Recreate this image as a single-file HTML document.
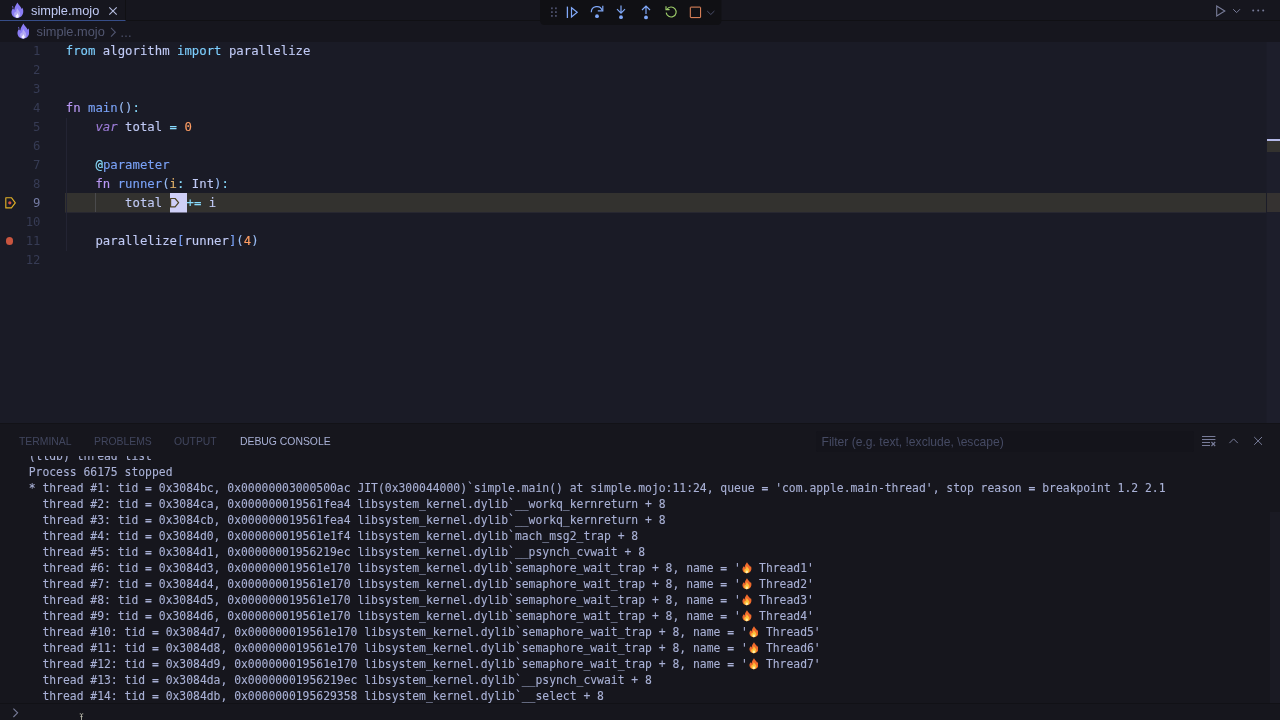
<!DOCTYPE html>
<html>
<head>
<meta charset="utf-8">
<title>simple.mojo</title>
<style>
*{box-sizing:border-box;margin:0;padding:0}
html,body{width:1280px;height:720px;overflow:hidden;background:#1a1b26}
body{position:relative;font-family:"Liberation Sans",sans-serif;color:#a9b1d6}
.abs{position:absolute}
#tab,#crumbs,#editor,#panel{will-change:transform}
#tabbar{left:0;top:0;width:1280px;height:21px;background:#16161e;border-bottom:1px solid #101014}
#tab{left:0;top:0;width:126px;height:21px;background:#16161e;border-right:1px solid #101014;border-bottom:1px solid #364d88}
#tab .lbl{left:31px;top:3px;font-size:12.8px;line-height:15px;color:#c0caf5;white-space:nowrap}
#crumbs{left:0;top:21px;width:1280px;height:21px;background:#16161e}
#crumbs .lbl{left:36.5px;top:2.5px;font-size:12.8px;line-height:15px;color:#515670;white-space:nowrap}
#editor{left:0;top:42px;width:1280px;height:381px;background:#1a1b26;overflow:hidden}
.ln{position:absolute;left:0;width:40.5px;height:19px;line-height:19px;text-align:right;font-family:"DejaVu Sans Mono","Liberation Mono",monospace;font-size:12.27px;color:#363b54;white-space:pre}
.ln.act{color:#737aa2}
.cl{position:absolute;left:65.8px;height:19px;line-height:19px;font-family:"DejaVu Sans Mono","Liberation Mono",monospace;font-size:12.32px;-webkit-text-stroke:0.12px;color:#c0caf5;white-space:pre}
.k{color:#bb9af7}.kc{color:#7dcfff}.f{color:#7aa2f7}.p{color:#9abdf5}.o{color:#89ddff}.n{color:#ff9e64}.y{color:#e0af68}.v{color:#9d7cd8;font-style:italic}.b{color:#7aa2f7}
#toolbar{left:544px;top:0;width:173px;height:24px;background:#101014;border-radius:5px}
#panel{left:0;top:423px;width:1280px;height:297px;background:#16161d;border-top:1px solid #121217}
.pt{position:absolute;top:11px;font-size:10.4px;line-height:13px;color:#41465e;white-space:nowrap}
.pt.on{color:#a9b1d6}
#filter{left:816px;top:7px;width:378px;height:20.5px;background:#14141b;border-radius:2px}
#filter span{position:absolute;left:5.5px;top:3.5px;font-size:12.1px;line-height:14px;color:#454a63;white-space:nowrap}
#console{left:0;top:32px;width:1270px;height:250px;overflow:hidden}
.em{display:inline-block;position:relative;width:11.3px;height:16px;overflow:hidden;vertical-align:top;color:transparent}
.em svg{position:absolute;left:1px;top:2px;width:9.6px;height:11.6px}
.co{position:absolute;left:28.7px;height:16px;line-height:16px;font-family:"DejaVu Sans Mono","Liberation Mono",monospace;font-size:11.38px;color:#a9b1d6;white-space:pre;-webkit-text-stroke:0.1px}
</style>
</head>
<body>
<div id="tabbar" class="abs"></div>
<div id="tab" class="abs"><span class="lbl abs">simple.mojo</span></div>
<div id="crumbs" class="abs"><span class="lbl abs">simple.mojo</span></div>

<!-- flame icons -->
<svg class="abs" style="left:11.3px;top:2px" width="12.4" height="16.4" viewBox="0 0 26 32" preserveAspectRatio="none"><path d="M13.5 1 C15 5 20.5 8.5 22.5 13.5 C23.5 12.5 23.8 11.5 23.8 10.5 C26 14 26 18 25.5 21 C24.5 27 19.5 31 13 31 C6.5 31 1.5 27 1 21 C0.6 16.5 3 13.5 4.5 11.5 C5 13.5 6 14.5 7 15 C7 10 10.5 6 13.5 1 Z" fill="#8a7cf4"/><path d="M3.2 7.5 C4 8.8 5 9.2 5.2 10.5 C4.6 11.4 3.4 11.4 2.8 10.5 C2.4 9.5 2.8 8.5 3.2 7.5 Z" fill="#8a7cf4"/><path d="M13 12 C15 16 19.5 18.5 19.5 24 C19.5 28 16.5 30.6 13 30.6 C9.5 30.6 6.5 28 6.5 24.2 C6.5 21.5 8 19.8 9.3 18.5 C9.6 19.6 10.2 20.2 11 20.5 C10.8 17.5 12 14.5 13 12 Z" fill="#b3aaf3"/><path d="M12.8 21.5 C14 24 16.2 25 16.2 27.6 C16.2 29.5 14.8 30.6 13 30.6 C11.2 30.6 9.8 29.5 9.8 27.7 C9.8 26.2 10.6 25.4 11.3 24.8 C11.6 25.4 11.9 25.7 12.3 25.8 C12.2 24.2 12.4 22.8 12.8 21.5 Z" fill="#f1efff"/></svg>
<svg class="abs" style="left:16.7px;top:23px" width="12.4" height="16.2" viewBox="0 0 26 32" preserveAspectRatio="none"><path d="M13.5 1 C15 5 20.5 8.5 22.5 13.5 C23.5 12.5 23.8 11.5 23.8 10.5 C26 14 26 18 25.5 21 C24.5 27 19.5 31 13 31 C6.5 31 1.5 27 1 21 C0.6 16.5 3 13.5 4.5 11.5 C5 13.5 6 14.5 7 15 C7 10 10.5 6 13.5 1 Z" fill="#8a7cf4"/><path d="M3.2 7.5 C4 8.8 5 9.2 5.2 10.5 C4.6 11.4 3.4 11.4 2.8 10.5 C2.4 9.5 2.8 8.5 3.2 7.5 Z" fill="#8a7cf4"/><path d="M13 12 C15 16 19.5 18.5 19.5 24 C19.5 28 16.5 30.6 13 30.6 C9.5 30.6 6.5 28 6.5 24.2 C6.5 21.5 8 19.8 9.3 18.5 C9.6 19.6 10.2 20.2 11 20.5 C10.8 17.5 12 14.5 13 12 Z" fill="#b3aaf3"/><path d="M12.8 21.5 C14 24 16.2 25 16.2 27.6 C16.2 29.5 14.8 30.6 13 30.6 C11.2 30.6 9.8 29.5 9.8 27.7 C9.8 26.2 10.6 25.4 11.3 24.8 C11.6 25.4 11.9 25.7 12.3 25.8 C12.2 24.2 12.4 22.8 12.8 21.5 Z" fill="#f1efff"/></svg>

<!-- tab close -->
<svg class="abs" style="left:105px;top:3px" width="16" height="16" viewBox="0 0 16 16"><path d="M4.3 4.3 L11.7 11.7 M11.7 4.3 L4.3 11.7" stroke="#b4bce0" stroke-width="1.1" fill="none"/></svg>
<!-- breadcrumb chevron + dots -->
<svg class="abs" style="left:105px;top:23.5px" width="16" height="16" viewBox="0 0 16 16"><path d="M6 3.8 L10.3 8.2 L6 12.6" stroke="#515670" stroke-width="1.1" fill="none"/></svg>
<span class="abs" style="left:119.8px;top:26px;font-size:12px;line-height:15px;color:#515670;letter-spacing:-0.5px;will-change:transform">&#8230;</span>

<svg class="abs" style="left:540px;top:0" width="182" height="25" viewBox="0 0 182 25">
<path d="M0 0 H181.5 V20 Q181.5 25 176.5 25 H5 Q0 25 0 20 Z" fill="#101014"/>
<g fill="#4a4e69"><rect x="11" y="7.4" width="1.8" height="1.8"/><rect x="15" y="7.4" width="1.8" height="1.8"/><rect x="11" y="11.2" width="1.8" height="1.8"/><rect x="15" y="11.2" width="1.8" height="1.8"/><rect x="11" y="15" width="1.8" height="1.8"/><rect x="15" y="15" width="1.8" height="1.8"/></g>
<g stroke="#80a8f8" fill="none" stroke-width="1.2">
<path d="M27.4 6.6 V18" stroke-width="1.3"/><path d="M31.5 7.7 L37.2 12.3 L31.5 16.9 Z" stroke-linejoin="miter"/>
<path d="M51.3 12.2 A5.6 5.6 0 0 1 62.2 10.4"/><path d="M62.8 5.8 V10.8 H57.8"/>
<path d="M81 5.5 V13 M77 9.2 L81 13.2 L85 9.2"/>
<path d="M106 14 V6.3 M102 10 L106 6 L110 10"/>
</g>
<g fill="#80a8f8"><circle cx="57" cy="16.2" r="1.9"/><circle cx="81" cy="17.2" r="1.9"/><circle cx="106" cy="17.4" r="1.9"/></g>
<path d="M127 9.2 A5 5 0 1 1 126.2 12.6" stroke="#9ece6a" stroke-width="1.15" fill="none"/><path d="M126 6.2 V9.6 H129.6" stroke="#9ece6a" stroke-width="1.15" fill="none"/>
<rect x="150.3" y="7.1" width="10.3" height="10.5" stroke="#ea8b5e" stroke-width="1" fill="none" rx="0.5"/>
<path d="M167.2 11 L170.8 14.5 L174.4 11" stroke="#4a4e69" stroke-width="1" fill="none"/>
</svg>
<!-- editor actions -->
<svg class="abs" style="left:1210px;top:0" width="60" height="21" viewBox="0 0 60 21">
<path d="M6.7 6 L14.8 11 L6.7 16 Z" stroke="#787c99" stroke-width="1.1" fill="none" stroke-linejoin="miter"/>
<path d="M23.2 9.2 L26.6 12.6 L30 9.2" stroke="#787c99" stroke-width="1" fill="none"/>
<g fill="#787c99"><circle cx="43.2" cy="10.5" r="1"/><circle cx="48.2" cy="10.5" r="1"/><circle cx="53.2" cy="10.5" r="1"/></g>
</svg>

<div id="editor" class="abs">
<div id="hl" class="abs" style="left:65.4px;top:151px;width:1215px;height:19px;background:#33322f"></div>
<div class="abs" style="left:65.4px;top:170px;width:1215px;height:1px;background:#272730"></div>

<div class="abs" style="left:66px;top:76px;width:1px;height:133px;background:#232433"></div>
<div class="abs" style="left:95px;top:151px;width:1px;height:19px;background:#4a4a4c"></div>
<div class="abs" style="left:169.7px;top:151px;width:17.3px;height:19px;background:#cfcff7"></div>
<div class="abs" style="left:169.7px;top:170px;width:17.3px;height:1px;background:#75758e"></div>
<svg class="abs" style="left:169px;top:154px" width="12" height="13" viewBox="0 0 12 13"><path d="M1.6 2.5 H6.1 L9.6 6.7 L6.1 10.9 H1.6 Z" stroke="#4d4324" stroke-width="1.2" fill="none" stroke-linejoin="round"/></svg>
<svg class="abs" style="left:3px;top:152px" width="16" height="16" viewBox="0 0 16 16"><path d="M2.8 3.7 H8.4 L12.3 8.8 L8.4 13.9 H2.8 Z" stroke="#e0af27" stroke-width="1.15" fill="none" stroke-linejoin="round"/><circle cx="6.8" cy="8.8" r="1.6" fill="#d9503f"/></svg>
<div class="abs" style="left:5.7px;top:195px;width:7.7px;height:7.7px;border-radius:50%;background:#c8553f"></div>
<div class="abs" style="left:1266px;top:0;width:14px;height:382px;background:#1d1e2b;border-left:1px solid #1b1c28"></div>
<div class="abs" style="left:1267px;top:151px;width:13px;height:19px;background:#353231"></div>
<div class="abs" style="left:1267px;top:97px;width:13px;height:2px;background:#b4b9e8"></div>
<div class="abs" style="left:1267px;top:99px;width:13px;height:11px;background:#33322f"></div>
<div class="ln" style="top:0px">1</div>
<div class="ln" style="top:19px">2</div>
<div class="ln" style="top:38px">3</div>
<div class="ln" style="top:57px">4</div>
<div class="ln" style="top:76px">5</div>
<div class="ln" style="top:95px">6</div>
<div class="ln" style="top:114px">7</div>
<div class="ln" style="top:133px">8</div>
<div class="ln act" style="top:152px">9</div>
<div class="ln" style="top:171px">10</div>
<div class="ln" style="top:190px">11</div>
<div class="ln" style="top:209px">12</div>
<div class="cl" style="top:0px"><span class="kc">from</span> algorithm <span class="kc">import</span> parallelize</div>
<div class="cl" style="top:57px"><span class="k">fn</span> <span class="f">main</span><span class="p">()</span><span class="o">:</span></div>
<div class="cl" style="top:76px">    <span class="v">var</span> total <span class="o">=</span> <span class="n">0</span></div>
<div class="cl" style="top:114px">    <span class="o">@</span><span class="b">parameter</span></div>
<div class="cl" style="top:133px">    <span class="k">fn</span> <span class="f">runner</span><span class="p">(</span><span class="y">i</span><span class="o">:</span> Int<span class="p">)</span><span class="o">:</span></div>
<div class="cl" style="top:152px">        total </div>
<div class="cl" style="top:152px;left:186.6px"><span class="o">+=</span> i</div>
<div class="cl" style="top:190px">    parallelize<span class="f">[</span>runner<span class="f">]</span><span class="p">(</span><span class="n">4</span><span class="p">)</span></div>
</div>
<div id="panel" class="abs">
<span class="pt" style="left:19px">TERMINAL</span>
<span class="pt" style="left:94px">PROBLEMS</span>
<span class="pt" style="left:174px">OUTPUT</span>
<span class="pt on" style="left:240px">DEBUG CONSOLE</span>
<div id="filter" class="abs"><span>Filter (e.g. text, !exclude, \escape)</span></div>

<svg class="abs" style="left:1196px;top:5px" width="76" height="24" viewBox="0 0 76 24">
<g stroke="#787c99" fill="none" stroke-width="1">
<path d="M6 7.5 H19.4 M6 10.5 H19.4 M6 13.5 H14 M6 16.5 H14"/>
<path d="M15.4 13 L19.2 17 M19.2 13 L15.4 17" stroke-width="1.1"/>
<path d="M33.4 14.1 L37.6 9.9 L41.8 14.1"/>
<path d="M58.2 8 L66 15.8 M66 8 L58.2 15.8"/>
</g></svg>
<svg class="abs" style="left:8px;top:281px" width="16" height="16" viewBox="0 0 16 16"><path d="M5.4 3.6 L9.6 7.8 L5.4 12" stroke="#787c99" stroke-width="1.1" fill="none"/></svg>
<div class="abs" style="left:1270px;top:88px;width:10px;height:191px;background:#1a1a23"></div>
<div class="abs" style="left:0;top:279px;width:1280px;height:1px;background:#111116"></div>
<svg class="abs" style="left:78px;top:289px" width="8" height="7" viewBox="0 0 8 7"><path d="M1.2 0.3 H5.8 V1.8 H4.6 V3 H5.4 V4.2 H4.6 V7 H2.4 V4.2 H1.6 V3 H2.4 V1.8 H1.2 Z" fill="#15151a"/><path d="M1.7 0.9 H3 L3.5 1.4 L4 0.9 H5.3 M3.5 1.4 V7 M2.3 3.6 H4.7" stroke="#c4c4b8" stroke-width="0.8" fill="none"/></svg>
<div id="console" class="abs">
<div class="co" style="top:-8px">(lldb) thread list</div>
<div class="co" style="top:8px">Process 66175 stopped</div>
<div class="co" style="top:24px">* thread #1: tid = 0x3084bc, 0x00000003000500ac JIT(0x300044000)`simple.main() at simple.mojo:11:24, queue = 'com.apple.main-thread', stop reason = breakpoint 1.2 2.1</div>
<div class="co" style="top:40px">  thread #2: tid = 0x3084ca, 0x000000019561fea4 libsystem_kernel.dylib`__workq_kernreturn + 8</div>
<div class="co" style="top:56px">  thread #3: tid = 0x3084cb, 0x000000019561fea4 libsystem_kernel.dylib`__workq_kernreturn + 8</div>
<div class="co" style="top:72px">  thread #4: tid = 0x3084d0, 0x000000019561e1f4 libsystem_kernel.dylib`mach_msg2_trap + 8</div>
<div class="co" style="top:88px">  thread #5: tid = 0x3084d1, 0x00000001956219ec libsystem_kernel.dylib`__psynch_cvwait + 8</div>
<div class="co" style="top:104px">  thread #6: tid = 0x3084d3, 0x000000019561e170 libsystem_kernel.dylib`semaphore_wait_trap + 8, name = '<span class="em">&#128293;<svg viewBox="0 0 26 32"><path d="M13.5 1 C15 5 20.5 8.5 22.5 13.5 C23.5 12.5 23.8 11.5 23.8 10.5 C26 14 26 18 25.5 21 C24.5 27 19.5 31 13 31 C6.5 31 1.5 27 1 21 C0.6 16.5 3 13.5 4.5 11.5 C5 13.5 6 14.5 7 15 C7 10 10.5 6 13.5 1 Z" fill="#f06a2c"/><path d="M13 11 C15 15.5 20.2 18.5 20.2 24 C20.2 28 16.8 30.8 13 30.8 C9.2 30.8 5.8 28 5.8 24.2 C5.8 21.2 7.6 19.4 9 18 C9.4 19.4 10 20 11 20.4 C10.6 17 12 14 13 11 Z" fill="#fcc23a"/><path d="M12.8 21.5 C14 24 16.4 25 16.4 27.6 C16.4 29.6 14.8 30.8 13 30.8 C11.2 30.8 9.6 29.6 9.6 27.7 C9.6 26.2 10.5 25.4 11.2 24.8 C11.5 25.4 11.9 25.7 12.3 25.8 C12.2 24.2 12.4 22.8 12.8 21.5 Z" fill="#fff0b0"/></svg></span> Thread1'</div>
<div class="co" style="top:120px">  thread #7: tid = 0x3084d4, 0x000000019561e170 libsystem_kernel.dylib`semaphore_wait_trap + 8, name = '<span class="em">&#128293;<svg viewBox="0 0 26 32"><path d="M13.5 1 C15 5 20.5 8.5 22.5 13.5 C23.5 12.5 23.8 11.5 23.8 10.5 C26 14 26 18 25.5 21 C24.5 27 19.5 31 13 31 C6.5 31 1.5 27 1 21 C0.6 16.5 3 13.5 4.5 11.5 C5 13.5 6 14.5 7 15 C7 10 10.5 6 13.5 1 Z" fill="#f06a2c"/><path d="M13 11 C15 15.5 20.2 18.5 20.2 24 C20.2 28 16.8 30.8 13 30.8 C9.2 30.8 5.8 28 5.8 24.2 C5.8 21.2 7.6 19.4 9 18 C9.4 19.4 10 20 11 20.4 C10.6 17 12 14 13 11 Z" fill="#fcc23a"/><path d="M12.8 21.5 C14 24 16.4 25 16.4 27.6 C16.4 29.6 14.8 30.8 13 30.8 C11.2 30.8 9.6 29.6 9.6 27.7 C9.6 26.2 10.5 25.4 11.2 24.8 C11.5 25.4 11.9 25.7 12.3 25.8 C12.2 24.2 12.4 22.8 12.8 21.5 Z" fill="#fff0b0"/></svg></span> Thread2'</div>
<div class="co" style="top:136px">  thread #8: tid = 0x3084d5, 0x000000019561e170 libsystem_kernel.dylib`semaphore_wait_trap + 8, name = '<span class="em">&#128293;<svg viewBox="0 0 26 32"><path d="M13.5 1 C15 5 20.5 8.5 22.5 13.5 C23.5 12.5 23.8 11.5 23.8 10.5 C26 14 26 18 25.5 21 C24.5 27 19.5 31 13 31 C6.5 31 1.5 27 1 21 C0.6 16.5 3 13.5 4.5 11.5 C5 13.5 6 14.5 7 15 C7 10 10.5 6 13.5 1 Z" fill="#f06a2c"/><path d="M13 11 C15 15.5 20.2 18.5 20.2 24 C20.2 28 16.8 30.8 13 30.8 C9.2 30.8 5.8 28 5.8 24.2 C5.8 21.2 7.6 19.4 9 18 C9.4 19.4 10 20 11 20.4 C10.6 17 12 14 13 11 Z" fill="#fcc23a"/><path d="M12.8 21.5 C14 24 16.4 25 16.4 27.6 C16.4 29.6 14.8 30.8 13 30.8 C11.2 30.8 9.6 29.6 9.6 27.7 C9.6 26.2 10.5 25.4 11.2 24.8 C11.5 25.4 11.9 25.7 12.3 25.8 C12.2 24.2 12.4 22.8 12.8 21.5 Z" fill="#fff0b0"/></svg></span> Thread3'</div>
<div class="co" style="top:152px">  thread #9: tid = 0x3084d6, 0x000000019561e170 libsystem_kernel.dylib`semaphore_wait_trap + 8, name = '<span class="em">&#128293;<svg viewBox="0 0 26 32"><path d="M13.5 1 C15 5 20.5 8.5 22.5 13.5 C23.5 12.5 23.8 11.5 23.8 10.5 C26 14 26 18 25.5 21 C24.5 27 19.5 31 13 31 C6.5 31 1.5 27 1 21 C0.6 16.5 3 13.5 4.5 11.5 C5 13.5 6 14.5 7 15 C7 10 10.5 6 13.5 1 Z" fill="#f06a2c"/><path d="M13 11 C15 15.5 20.2 18.5 20.2 24 C20.2 28 16.8 30.8 13 30.8 C9.2 30.8 5.8 28 5.8 24.2 C5.8 21.2 7.6 19.4 9 18 C9.4 19.4 10 20 11 20.4 C10.6 17 12 14 13 11 Z" fill="#fcc23a"/><path d="M12.8 21.5 C14 24 16.4 25 16.4 27.6 C16.4 29.6 14.8 30.8 13 30.8 C11.2 30.8 9.6 29.6 9.6 27.7 C9.6 26.2 10.5 25.4 11.2 24.8 C11.5 25.4 11.9 25.7 12.3 25.8 C12.2 24.2 12.4 22.8 12.8 21.5 Z" fill="#fff0b0"/></svg></span> Thread4'</div>
<div class="co" style="top:168px">  thread #10: tid = 0x3084d7, 0x000000019561e170 libsystem_kernel.dylib`semaphore_wait_trap + 8, name = '<span class="em">&#128293;<svg viewBox="0 0 26 32"><path d="M13.5 1 C15 5 20.5 8.5 22.5 13.5 C23.5 12.5 23.8 11.5 23.8 10.5 C26 14 26 18 25.5 21 C24.5 27 19.5 31 13 31 C6.5 31 1.5 27 1 21 C0.6 16.5 3 13.5 4.5 11.5 C5 13.5 6 14.5 7 15 C7 10 10.5 6 13.5 1 Z" fill="#f06a2c"/><path d="M13 11 C15 15.5 20.2 18.5 20.2 24 C20.2 28 16.8 30.8 13 30.8 C9.2 30.8 5.8 28 5.8 24.2 C5.8 21.2 7.6 19.4 9 18 C9.4 19.4 10 20 11 20.4 C10.6 17 12 14 13 11 Z" fill="#fcc23a"/><path d="M12.8 21.5 C14 24 16.4 25 16.4 27.6 C16.4 29.6 14.8 30.8 13 30.8 C11.2 30.8 9.6 29.6 9.6 27.7 C9.6 26.2 10.5 25.4 11.2 24.8 C11.5 25.4 11.9 25.7 12.3 25.8 C12.2 24.2 12.4 22.8 12.8 21.5 Z" fill="#fff0b0"/></svg></span> Thread5'</div>
<div class="co" style="top:184px">  thread #11: tid = 0x3084d8, 0x000000019561e170 libsystem_kernel.dylib`semaphore_wait_trap + 8, name = '<span class="em">&#128293;<svg viewBox="0 0 26 32"><path d="M13.5 1 C15 5 20.5 8.5 22.5 13.5 C23.5 12.5 23.8 11.5 23.8 10.5 C26 14 26 18 25.5 21 C24.5 27 19.5 31 13 31 C6.5 31 1.5 27 1 21 C0.6 16.5 3 13.5 4.5 11.5 C5 13.5 6 14.5 7 15 C7 10 10.5 6 13.5 1 Z" fill="#f06a2c"/><path d="M13 11 C15 15.5 20.2 18.5 20.2 24 C20.2 28 16.8 30.8 13 30.8 C9.2 30.8 5.8 28 5.8 24.2 C5.8 21.2 7.6 19.4 9 18 C9.4 19.4 10 20 11 20.4 C10.6 17 12 14 13 11 Z" fill="#fcc23a"/><path d="M12.8 21.5 C14 24 16.4 25 16.4 27.6 C16.4 29.6 14.8 30.8 13 30.8 C11.2 30.8 9.6 29.6 9.6 27.7 C9.6 26.2 10.5 25.4 11.2 24.8 C11.5 25.4 11.9 25.7 12.3 25.8 C12.2 24.2 12.4 22.8 12.8 21.5 Z" fill="#fff0b0"/></svg></span> Thread6'</div>
<div class="co" style="top:200px">  thread #12: tid = 0x3084d9, 0x000000019561e170 libsystem_kernel.dylib`semaphore_wait_trap + 8, name = '<span class="em">&#128293;<svg viewBox="0 0 26 32"><path d="M13.5 1 C15 5 20.5 8.5 22.5 13.5 C23.5 12.5 23.8 11.5 23.8 10.5 C26 14 26 18 25.5 21 C24.5 27 19.5 31 13 31 C6.5 31 1.5 27 1 21 C0.6 16.5 3 13.5 4.5 11.5 C5 13.5 6 14.5 7 15 C7 10 10.5 6 13.5 1 Z" fill="#f06a2c"/><path d="M13 11 C15 15.5 20.2 18.5 20.2 24 C20.2 28 16.8 30.8 13 30.8 C9.2 30.8 5.8 28 5.8 24.2 C5.8 21.2 7.6 19.4 9 18 C9.4 19.4 10 20 11 20.4 C10.6 17 12 14 13 11 Z" fill="#fcc23a"/><path d="M12.8 21.5 C14 24 16.4 25 16.4 27.6 C16.4 29.6 14.8 30.8 13 30.8 C11.2 30.8 9.6 29.6 9.6 27.7 C9.6 26.2 10.5 25.4 11.2 24.8 C11.5 25.4 11.9 25.7 12.3 25.8 C12.2 24.2 12.4 22.8 12.8 21.5 Z" fill="#fff0b0"/></svg></span> Thread7'</div>
<div class="co" style="top:216px">  thread #13: tid = 0x3084da, 0x00000001956219ec libsystem_kernel.dylib`__psynch_cvwait + 8</div>
<div class="co" style="top:232px">  thread #14: tid = 0x3084db, 0x0000000195629358 libsystem_kernel.dylib`__select + 8</div>
</div>
</div>
</body>
</html>
